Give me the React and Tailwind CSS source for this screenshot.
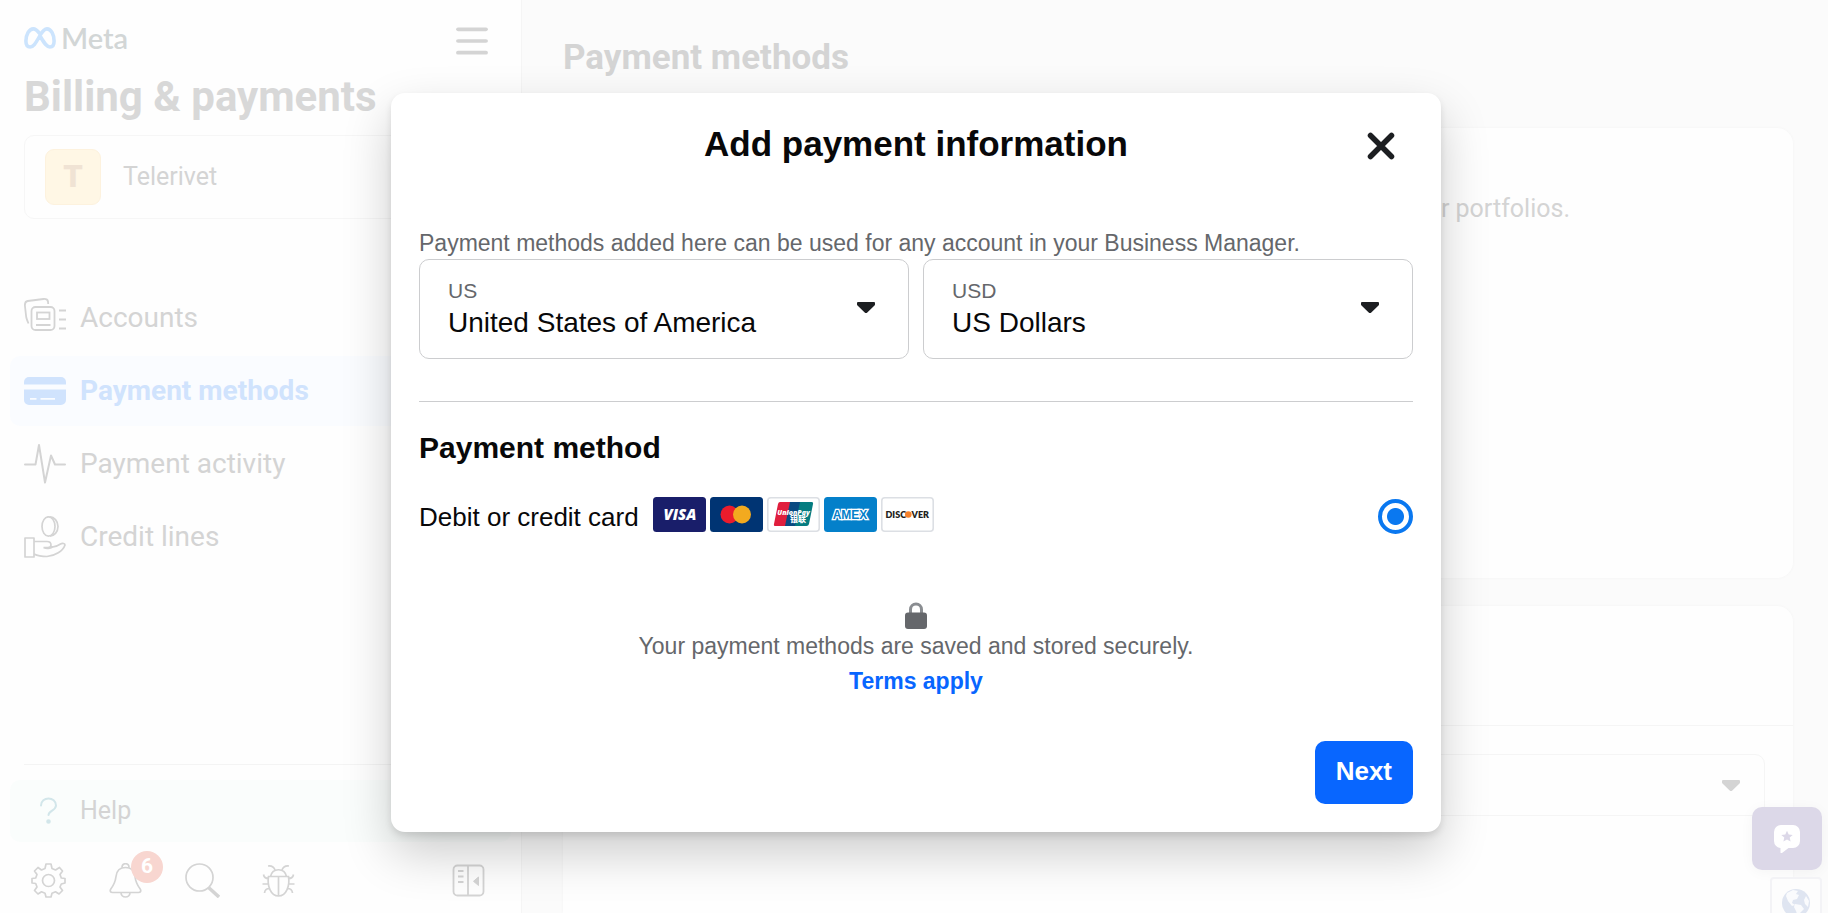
import React from 'react';
import { Menu } from 'lucide-react';

const COUNTRY = { code: 'US', name: 'United States of America' };
const CURRENCY = { code: 'USD', name: 'US Dollars' };

/**
 * Navigation icons
 */
const AccountsIcon = () => (
  <svg viewBox="0 0 42 42" className="h-[42px] w-[42px]" fill="none" stroke="currentColor" strokeWidth="1.8" aria-hidden="true">
    <path d="M4.5 26.500 Q2.500 22 2.200 20 L0.900 8.500 Q0.700 4.500 3.700 4 L19.500 2 Q23.500 1.700 24 4.500 L24.200 7" />
    <rect x="7.500" y="10" width="23" height="23" rx="4" />
    <rect x="13" y="15.500" width="12.500" height="6.500" />
    <path d="M12 28h14.500M35 13.500h7M35 22.500h7M35 31.500h7" />
  </svg>
);

const CardIcon = () => (
  <svg viewBox="0 0 42 42" className="h-[42px] w-[42px]" fill="currentColor" aria-hidden="true">
    <path d="M5 7h32a5 5 0 0 1 5 5v2.500H0V12a5 5 0 0 1 5-5z" />
    <path fillRule="evenodd" d="M0 19.500h42V30a5 5 0 0 1-5 5H5a5 5 0 0 1-5-5zM6 28v1.700h6.500V28zM16.500 28v1.700H31V28z" />
  </svg>
);

const ActivityIcon = () => (
  <svg viewBox="0 0 42 42" className="h-[42px] w-[42px]" fill="none" stroke="currentColor" strokeWidth="2" strokeLinejoin="round" strokeLinecap="round" aria-hidden="true">
    <path d="M1 21.500h10.500L15 2l6 37.500 6-27 4 9h10" />
  </svg>
);

const CreditIcon = () => (
  <svg viewBox="0 0 42 42" className="h-[42px] w-[42px]" fill="none" stroke="currentColor" strokeWidth="1.700" strokeLinejoin="round" aria-hidden="true">
    <ellipse cx="24.500" cy="10.500" rx="6.500" ry="9.700" />
    <path d="M26 0.900c4 0 8 4 8 9.600s-4 9.600-8 9.600" />
    <path d="M1 22h9v19H1zM10 25.500h13c3 0 4 2 4 3.500s-1 2.500-3 2.500h-4.500M27 30.500c3 1 8-1.500 9.500-2.500 2-1.200 4.500-.5 4.500 1-2 6-10 11-18 11.500-5 0-9-.5-13-2.500M19.500 31.500c3 1.500 7 1 9-.5" />
  </svg>
);

const NAV_ITEMS = [
  { label: 'Accounts', Icon: AccountsIcon },
  { label: 'Payment methods', Icon: CardIcon, active: true },
  { label: 'Payment activity', Icon: ActivityIcon },
  { label: 'Credit lines', Icon: CreditIcon },
];

/**
 * Toolbar icons
 */
const GearIcon = () => (
  <svg viewBox="0 0 35 35" className="h-[35px] w-[35px]" fill="none" stroke="currentColor" strokeWidth="1.700" strokeLinejoin="round" aria-hidden="true">
    <path d="M15 1h5l1 4.500 3.500 1.500 4-2.500L31.500 8 29 11.500l1.300 3.500 3.700.5v4.500l-3.700 1L29 24l2.500 3.500-3.500 3.500-3.500-2.200-3.500 1.400L20 34h-5l-1-3.800-3.500-1.400L7 31l-3.500-3.500L6 24l-1.300-3.500-3.700-.5v-4.500L4.700 15 6 11.500 3.500 8 7 4.500 10.500 7 14 5.500z" />
    <circle cx="17.500" cy="17.500" r="6" />
  </svg>
);

const BellIcon = () => (
  <svg viewBox="0 0 35 35" className="h-[35px] w-[35px]" fill="none" stroke="currentColor" strokeWidth="1.700" strokeLinejoin="round" aria-hidden="true">
    <path d="M17.500 4.500c6 0 9 4 9.500 9 .6 5 2.500 9 5.200 12.500 1.300 2 .3 3.500-1.700 3.500h-26c-2 0-3-1.500-1.700-3.500C5.500 22.500 7.400 18.500 8 13.500c.5-5 3.500-9 9.500-9z" />
    <path d="M14 4.500c0-5 7-5 7 0M13 29.500c0 6 9 6 9 0" />
  </svg>
);

const SearchIcon = () => (
  <svg viewBox="0 0 35 35" className="h-[35px] w-[35px]" fill="none" stroke="currentColor" aria-hidden="true">
    <circle cx="14.500" cy="14.500" r="13.500" strokeWidth="1.700" />
    <path d="M23.500 24.500l10.500 9.500" strokeWidth="3.500" />
  </svg>
);

const BugIcon = () => (
  <svg viewBox="0 0 35 35" className="h-[35px] w-[35px]" fill="none" stroke="currentColor" strokeWidth="1.700" aria-hidden="true">
    <path d="M6.500 13.500h20c1.500 9-2 19.500-10 19.500s-11.500-10.500-10-19.500zM16.500 13.500V33M8.500 13.500c2-9 14-9 16 0M6 3c4-.5 6 1 7 4M27 3c-4-.5-6 1-7 4M1.500 11.500c.5 3 2 4 5 4M31.500 11.500c-.5 3-2 4-5 4M.5 21h6M32.500 21h-6M2.500 30c.3-3 2-4.500 5-4.500M30.500 30c-.3-3-2-4.500-5-4.500" />
  </svg>
);

const PanelIcon = () => (
  <svg viewBox="0 0 35 35" className="h-[35px] w-[35px]" fill="none" stroke="currentColor" strokeWidth="1.800" aria-hidden="true">
    <rect x="2.500" y="2.500" width="30" height="30" rx="4" />
    <path d="M17 2.500v30M7 8h5.500M7 13.500h5.500M7 19h5.500" />
    <path d="M27.500 14v8.500l-5-4.200z" fill="currentColor" strokeWidth="1" />
  </svg>
);

const TOOLS = [
  { label: 'Settings', Icon: GearIcon },
  { label: 'Notifications', Icon: BellIcon, count: 6 },
  { label: 'Search', Icon: SearchIcon },
  { label: 'Report a bug', Icon: BugIcon },
];

const Caret = ({ className }) => (
  <svg viewBox="0 0 18 11" className={`h-[11px] w-[18px] ${className}`} fill="currentColor" aria-hidden="true">
    <path d="M1 0h16q1 0 1 1v1.500q0 .6-.5 1L10.300 10.400q-1.300 1.200-2.600 0L.5 3.500Q0 3.100 0 2.500V1q0-1 1-1z" />
  </svg>
);

/**
 * Sidebar
 */
const Sidebar = () => (
  <aside className="flex w-[522px] shrink-0 flex-col border-r border-[#f5f5f5] bg-[#fefefe] px-[10px] pt-[22px] text-[#d4d4d4]">
    <div className="flex items-start justify-between pr-[18px] pl-[14px]">
      <div className="flex items-center gap-[5px] font-[Lato,sans-serif] text-[29px] leading-8 font-semibold text-[#d2d6d6]">
        <svg viewBox="0 0 32 22" className="h-[22px] w-8" fill="none" strokeWidth="3.600" aria-hidden="true">
          <path d="M16 7C13 3 11.500 1.900 9.300 1.900 5 1.900 1.900 8 1.900 14c0 4 1.600 6 4.300 6 3 0 4.800-2.500 9.800-11.500C18.500 4 20.500 1.900 23 1.900c4.200 0 7.100 6 7.100 12.100 0 4-1.600 6-4.200 6-3 0-4.900-2.500-9.900-11" stroke="#cce4fd" />
        </svg>
        Meta
      </div>
      <button aria-label="Menu" className="-mt-px text-[#d4d4d4]">
        <Menu className="h-10 w-[42px]" strokeWidth={2.2} preserveAspectRatio="none" />
      </button>
    </div>
    <h1 className="mt-[11px] pl-[14px] text-[42px] leading-[50px] font-bold text-[#d8d8d8]">Billing &amp; payments</h1>
    <button className="mt-[13px] mr-2 ml-[14px] flex h-[84px] items-center gap-[22px] rounded-[10px] border border-[#f6f6f6] px-5 text-[25px]">
      <span className="flex h-14 w-14 items-center justify-center rounded-[9px] border border-[#fdf2de] bg-[#fff7e5] text-[31px] font-black text-[#f0e3d4]">T</span>
      Telerivet
    </button>
    <nav className="mt-[64px] flex flex-col gap-[3px] text-[28px]">
      {NAV_ITEMS.map(({ label, Icon, active }) => (
        <a
          key={label}
          href="#"
          className={`flex h-[70px] items-center gap-[14px] rounded-[10px] pl-[14px] ${active ? 'bg-[#fafcff] font-bold text-[#d0e3fd]' : ''}`}
        >
          <Icon />
          {label}
        </a>
      ))}
    </nav>
    <div className="mt-auto ml-[14px] border-t border-[#f4f4f4]" />
    <a href="#" className="mt-[15px] flex h-[62px] items-center gap-5 rounded-[10px] bg-[#fafdfc] pl-[29px] text-[25px]">
      <svg viewBox="0 0 21 28" className="h-7 w-[21px]" fill="none" stroke="#d2e6ea" strokeWidth="2" strokeLinecap="round" aria-hidden="true">
        <path d="M2 8.500C2-1 17-1 17 8.500c0 5-7.500 5-7.500 9.500" />
        <circle cx="9.500" cy="24.500" r="1.300" fill="#d2e6ea" />
      </svg>
      Help
    </a>
    <div className="flex items-center pt-[21px] pr-[25px] pb-[15px] pl-[21px]">
      <div className="flex gap-[42px]">
        {TOOLS.map(({ label, Icon, count }) => (
          <button key={label} aria-label={label} className="relative">
            <Icon />
            {count && (
              <span className="absolute -top-3 left-[23px] flex h-8 w-8 items-center justify-center rounded-full bg-[#f8d6d0] text-[21px] font-bold text-white">
                {count}
              </span>
            )}
          </button>
        ))}
      </div>
      <button aria-label="Collapse sidebar" className="ml-auto">
        <PanelIcon />
      </button>
    </div>
  </aside>
);

/**
 * Page content behind the dialog
 */
const PageContent = () => (
  <main className="flex flex-1 flex-col bg-[#fbfbfb] pr-[35px] pl-[41px] text-[#d4d4d4]">
    <h2 className="pt-[38px] text-[35px] leading-10 font-bold">Payment methods</h2>
    <section className="mt-[50px] h-[450px] rounded-2xl bg-[#fefefe] pt-[65px] pr-[223px] text-right text-[25px] leading-8 shadow-[0_0_3px_#f4f4f4]">
      other portfolios.
    </section>
    <section className="mt-7 flex-1 rounded-t-2xl bg-[#fefefe] shadow-[0_0_3px_#f4f4f4]">
      <div className="h-[120px] border-b border-[#f5f5f5]" />
      <button aria-label="Filter" className="mx-7 mt-7 flex h-[62px] w-[calc(100%-56px)] items-center justify-end rounded-[10px] border border-[#f5f5f5] pr-6">
        <Caret className="text-[#d4d4d4]" />
      </button>
    </section>
  </main>
);

const FloatingButtons = () => (
  <div className="absolute top-[807px] right-[6px] flex flex-col items-end gap-[7px]">
    <button aria-label="Feedback" className="flex h-[63px] w-[70px] items-center justify-center rounded-[10px] bg-[#dcd8e8] shadow-[0_2px_14px_rgba(0,0,0,0.04)]">
      <svg viewBox="0 0 26 28" className="h-7 w-[26px]" aria-hidden="true">
        <path fill="#fff" d="M7 0h12a7 7 0 0 1 7 7v9a7 7 0 0 1-7 7h-4.500L8 28q-1.500.8-1.500-.7V23A7 7 0 0 1 0 16V7a7 7 0 0 1 7-7z" />
        <path fill="#dcd8e8" d="M13 5.800l1.700 3.700 4 .4-3 2.700.9 4-3.600-2.100-3.600 2.100.9-4-3-2.700 4-.4z" />
      </svg>
    </button>
    <button aria-label="Language" className="flex h-[52px] w-[52px] items-start justify-center rounded-sm border-2 border-[#f3f3f6] bg-[#fdfdfd] pt-[10px]">
      <svg viewBox="0 0 28 28" className="h-7 w-7" aria-hidden="true">
        <circle cx="14" cy="14" r="14" fill="#dfe5f1" />
        <path fill="#fafbfd" d="M5 4l6-3 5 1-2 3 3 1-2 4-4 1-1 3 3 2-3 1-4-5-2-5zM13 15l6 1 3 4-4 4-2 4-2-6-2-4zM24 7l3 5-1 6-3-3-1-4z" />
      </svg>
    </button>
  </div>
);

/**
 * Accepted card brands
 */
const CardBrands = () => (
  <div className="flex gap-1 pb-1" aria-hidden="true">
    <svg viewBox="0 0 53 35" className="h-[35px] w-[53px]">
      <rect width="53" height="35" rx="3.500" fill="#191e6a" />
      <text x="27" y="23" textAnchor="middle" fill="#fff" fontFamily="Open Sans, sans-serif" fontSize="15" fontWeight="800" fontStyle="italic">VISA</text>
    </svg>
    <svg viewBox="0 0 53 35" className="h-[35px] w-[53px]">
      <rect width="53" height="35" rx="3.500" fill="#003473" />
      <circle cx="19.500" cy="17.500" r="9" fill="#ea1c2c" />
      <circle cx="32" cy="17.500" r="9" fill="#f2aa1f" />
    </svg>
    <svg viewBox="0 0 53 35" className="h-[35px] w-[53px]">
      <rect x="0.800" y="0.800" width="51.400" height="33.400" rx="3" fill="#fff" stroke="#dcdfe4" strokeWidth="1.600" />
      <path d="M13 5h12l-5 24H8q-1.500 0-1-2l4-20q.5-2 2-2z" fill="#e01e3d" />
      <path d="M23 5h12l-5 24H18z" fill="#0a4a81" />
      <path d="M33 5h11.500q2 0 1.500 2l-4 20q-.5 2-2.500 2H28z" fill="#057c80" />
      <text x="26.500" y="17.500" textAnchor="middle" fill="#fff" fontFamily="Open Sans, sans-serif" fontSize="7" fontWeight="800" fontStyle="italic">UnionPay</text>
      <text x="31" y="25" textAnchor="middle" fill="#fff" fontFamily="Noto Sans CJK SC, sans-serif" fontSize="8" fontWeight="900">银联</text>
    </svg>
    <svg viewBox="0 0 53 35" className="h-[35px] w-[53px]">
      <rect width="53" height="35" rx="3.500" fill="#0480ca" />
      <text x="26" y="22" textAnchor="middle" fill="#0480ca" stroke="#fff" strokeWidth="2.600" paintOrder="stroke" fontFamily="Liberation Sans, sans-serif" fontSize="12" fontWeight="700">AMEX</text>
    </svg>
    <svg viewBox="0 0 53 35" className="h-[35px] w-[53px]">
      <rect x="0.800" y="0.800" width="51.400" height="33.400" rx="3" fill="#fff" stroke="#dcdfe4" strokeWidth="1.600" />
      <text x="4.500" y="20.500" fill="#231f20" fontFamily="Lato, sans-serif" fontSize="9" fontWeight="800">DISC</text>
      <circle cx="27.300" cy="17.500" r="3.300" fill="#f5812a" />
      <text x="30.500" y="20.500" fill="#231f20" fontFamily="Lato, sans-serif" fontSize="9" fontWeight="800">VER</text>
    </svg>
  </div>
);

const SelectField = ({ value }) => (
  <button className="flex h-[100px] flex-1 items-center justify-between rounded-[10px] border border-[#cccdcf] pr-[33px] pl-7 text-left">
    <span className="flex flex-col">
      <span className="text-[21px] leading-7 text-[#65676b]">{value.code}</span>
      <span className="text-[28px] leading-9 text-[#080809]">{value.name}</span>
    </span>
    <Caret className="mb-[3px] text-[#1c1e21]" />
  </button>
);

/**
 * Add payment information dialog
 */
const PaymentDialog = () => (
  <div className="absolute inset-x-0 top-[93px] flex justify-center pl-1">
    <div
      role="dialog"
      aria-labelledby="dialogTitle"
      className="w-[1050px] rounded-[14px] bg-white px-7 pb-7 font-['Liberation_Sans',Arial,sans-serif] shadow-[0_21px_49px_rgba(0,0,0,0.2),0_4px_7px_rgba(0,0,0,0.1)]"
    >
      <header className="relative flex h-[106px] items-center justify-center pb-1">
        <h2 id="dialogTitle" className="text-[35px] leading-10 font-bold text-[#080809]">Add payment information</h2>
        <button aria-label="Close" className="absolute top-[39px] right-[18px]">
          <svg viewBox="0 0 28 28" className="h-7 w-7" fill="none" stroke="#1c1e21" strokeWidth="5.500" strokeLinecap="round" aria-hidden="true">
            <path d="M3.500 3.500l21 21M24.500 3.500l-21 21" />
          </svg>
        </button>
      </header>

      <p className="pt-7 text-[23px] leading-8 text-[#65676b]">
        Payment methods added here can be used for any account in your Business Manager.
      </p>
      <div className="flex gap-[14px]">
        <SelectField value={COUNTRY} />
        <SelectField value={CURRENCY} />
      </div>

      <hr className="mt-[42px] border-[#cccdcf]" />

      <h3 className="mt-7 text-[30px] leading-9 font-bold text-[#080809]">Payment method</h3>
      <div className="mt-[31px] flex items-center">
        <label htmlFor="card" className="mr-[14px] text-[26px] leading-9 text-[#080809]">Debit or credit card</label>
        <CardBrands />
        <input
          id="card"
          type="radio"
          name="method"
          defaultChecked
          className="ml-auto h-[35px] w-[35px] appearance-none rounded-full border-4 border-[#0a78f0] bg-[radial-gradient(circle,#0a78f0_8px,#fff_9px)]"
        />
      </div>

      <div className="mt-[66px] flex flex-col items-center text-[23px] leading-[35px] text-[#65676b]">
        <svg viewBox="0 0 22 27" className="h-[27px] w-[22px]" aria-hidden="true">
          <path d="M5.500 12V7.500a5.500 5.500 0 0 1 11 0V12" fill="none" stroke="#8a8d91" strokeWidth="3" />
          <rect y="10.500" width="22" height="16.500" rx="3" fill="#65676b" />
        </svg>
        <p>Your payment methods are saved and stored securely.</p>
        <a href="#" className="font-bold text-[#0866ff]">Terms apply</a>
      </div>

      <footer className="mt-[42px] flex justify-end">
        <button className="h-[63px] rounded-[10px] bg-[#0866ff] px-[21px] pb-[2px] text-[26px] font-bold text-white">Next</button>
      </footer>
    </div>
  </div>
);

const App = () => (
  <div className="relative flex h-screen overflow-hidden bg-[#fbfbfb] font-[Roboto,sans-serif]">
    <Sidebar />
    <PageContent />
    <FloatingButtons />
    <PaymentDialog />
  </div>
);

export default App;
